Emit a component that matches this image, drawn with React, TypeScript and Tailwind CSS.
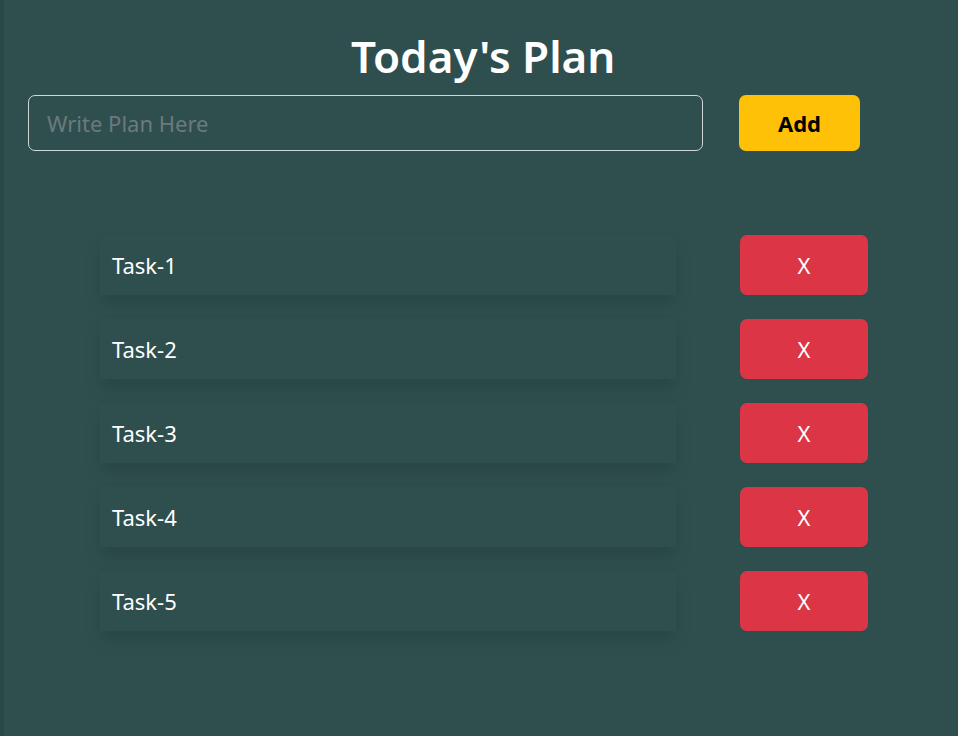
import React from "react";

export default function App() {
  const tasks = ["Task-1", "Task-2", "Task-3", "Task-4", "Task-5"];
  return (
    <div
      className="flex min-h-[736px] w-full bg-[#2f4f4f] text-white"
      style={{ fontFamily: '"Noto Sans", "Open Sans", sans-serif' }}
    >
      <div className="w-[4px] shrink-0 bg-[#2a4848]" />
      <div className="flex flex-1 flex-col">
        <h1 className="mt-[24px] ml-[347px] h-[64px] text-[44px] leading-[64px] font-semibold text-white">
          Today's Plan
        </h1>
        <div className="mt-[7px] flex items-center">
          <input
            className="ml-[24px] h-[56px] w-[675px] rounded-[7px] border border-[#d0d5d5] bg-transparent px-[18px] text-[22px] text-white placeholder:text-[#6c7a7d] outline-none"
            placeholder="Write Plan Here"
          />
          <button className="ml-[36px] h-[56px] w-[121px] rounded-[7px] bg-[#ffc107] text-[22px] font-bold text-black">
            Add
          </button>
        </div>
        <div className="mt-[84px] flex flex-col gap-[24px]">
          {tasks.map((t) => (
            <div key={t} className="flex items-center">
              <div className="ml-[96px] flex h-[60px] w-[576px] items-center bg-[#2f4f4f] pl-[12px] text-[22px] shadow-[0_10px_16px_rgba(0,0,0,0.12)]">
                {t}
              </div>
              <button className="ml-[64px] h-[60px] w-[128px] rounded-[7px] bg-[#dc3545] text-[22px] text-white">
                X
              </button>
            </div>
          ))}
        </div>
      </div>
    </div>
  );
}
